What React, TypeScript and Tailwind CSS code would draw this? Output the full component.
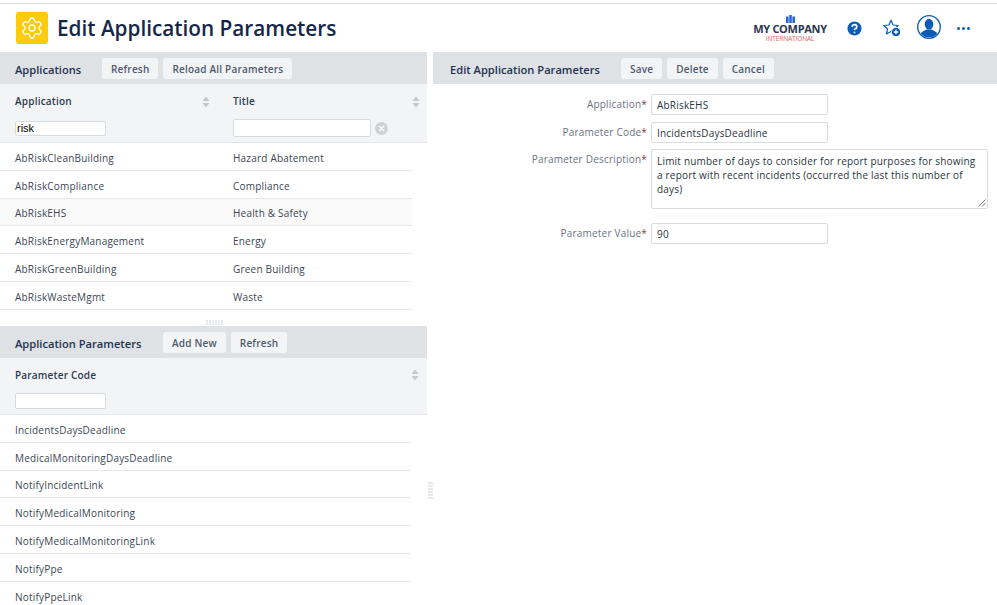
import { CircleHelp, Settings, X } from "lucide-react";

const applications = [
  { name: "AbRiskCleanBuilding", title: "Hazard Abatement" },
  { name: "AbRiskCompliance", title: "Compliance" },
  { name: "AbRiskEHS", title: "Health & Safety", selected: true },
  { name: "AbRiskEnergyManagement", title: "Energy" },
  { name: "AbRiskGreenBuilding", title: "Green Building" },
  { name: "AbRiskWasteMgmt", title: "Waste" },
];

const parameters = [
  "IncidentsDaysDeadline",
  "MedicalMonitoringDaysDeadline",
  "NotifyIncidentLink",
  "NotifyMedicalMonitoring",
  "NotifyMedicalMonitoringLink",
  "NotifyPpe",
  "NotifyPpeLink",
];

function SortIcon() {
  return (
    <svg width="8" height="12" viewBox="0 0 8 12" className="shrink-0">
      <path d="M4 0.5 L7.5 5 H0.5 Z" fill="#c4c8cc" />
      <path d="M4 11.5 L7.5 7 H0.5 Z" fill="#c4c8cc" />
    </svg>
  );
}

function Button({ label }: { label: string }) {
  return (
    <button className="h-[21px] rounded-[3px] bg-[#f3f4f6] px-[9px] pt-px text-[10px] font-semibold leading-[20px] tracking-[0.2px] text-[#4e5a6b]">
      {label}
    </button>
  );
}

function Bar({ title, buttons, titleClass }: { title: string; buttons: string[]; titleClass: string }) {
  return (
    <div className="flex h-[32px] shrink-0 items-center bg-[#dfe2e5] pt-[1px]">
      <span className={`${titleClass} mt-[3px] text-[11.15px] font-semibold text-[#1f3350]`}>{title}</span>
      <div className="flex gap-[5px]">
        {buttons.map((b) => (
          <Button key={b} label={b} />
        ))}
      </div>
    </div>
  );
}

function Handle({ vertical }: { vertical?: boolean }) {
  return (
    <div className={vertical ? "flex w-[5px] flex-col gap-[1px]" : "flex h-[5px] gap-[1px]"}>
      {[0, 1, 2, 3, 4, 5].map((i) => (
        <span key={i} className={vertical ? "h-[2px] w-[5px] bg-[#e6e8ea]" : "h-[5px] w-[2px] bg-[#e6e8ea]"} />
      ))}
    </div>
  );
}

function Field({ label, value }: { label: string; value: string }) {
  return (
    <div className="flex items-center">
      <label className="w-[218px] pr-[4px] text-right text-[10px] tracking-[0.2px] text-[#6b7280]">
        {label}
        <span className="text-[#8c3b3b]">*</span>
      </label>
      <div className="flex h-[21px] w-[177px] items-center rounded-[2px] border border-[#d8dbdf] px-[5px] pt-px text-[10px] tracking-[0.2px] text-[#2b3440]">
        {value}
      </div>
    </div>
  );
}

export default function App() {
  return (
    <div className="flex h-[605px] w-[997px] flex-col overflow-hidden bg-white font-['Open_Sans',sans-serif]">
      <div className="mt-[3px] h-px shrink-0 bg-[#dcdcdc]" />

      <header className="flex h-[48px] shrink-0 items-center pl-[16px]">
        <div className="flex h-[32px] w-[32px] items-center justify-center rounded-[3px] bg-[#fccb0a]">
          <Settings className="h-[24px] w-[24px] text-white" strokeWidth={1.3} />
        </div>
        <h1 className="ml-[9px] text-[20.75px] font-semibold leading-none text-[#14264a]">Edit Application Parameters</h1>

        <div className="ml-auto flex items-center">
          <div className="flex w-[74px] flex-col items-center leading-none">
            <svg width="9" height="8" viewBox="0 0 9 8">
              <path d="M0 1.5h2.6v6.5H0zM3.2 0h2.6v8H3.2zM6.4 1.5H9v6.5H6.4z" fill="#2d62d8" />
            </svg>
            <span className="mt-[1px] text-[11px] font-bold leading-[10px] tracking-[-0.3px] text-[#2a3555]">MY COMPANY</span>
            <span className="mt-[2px] text-[6.5px] leading-[6px] tracking-[-0.1px] text-[#d0695f]">INTERNATIONAL</span>
          </div>
          <CircleHelp className="ml-[18px] h-[19px] w-[19px] fill-[#0a5bb5] text-white" strokeWidth={2.2} />
          <svg width="18" height="18" viewBox="0 0 18 18" className="ml-[19px]">
            <path
              d="M8 1.2 L10.1 6 L15.2 6.5 L11.4 10 L12.5 15 L8 12.4 L3.5 15 L4.6 10 L0.8 6.5 L5.9 6 Z"
              fill="white"
              stroke="#0a5bb5"
              strokeWidth="1.2"
              strokeLinejoin="round"
            />
            <circle cx="13" cy="13" r="4.6" fill="#0a5bb5" stroke="white" strokeWidth="0.8" />
            <path d="M13 10.8v4.4M10.8 13h4.4" stroke="white" strokeWidth="1.3" />
          </svg>
          <svg width="24" height="24" viewBox="0 0 24 24" className="ml-[16px] -translate-y-px">
            <defs>
              <clipPath id="avatar">
                <circle cx="12" cy="12" r="10.5" />
              </clipPath>
            </defs>
            <circle cx="12" cy="12" r="11.3" fill="white" stroke="#0a5bb5" strokeWidth="1.3" />
            <g clipPath="url(#avatar)" fill="#0a5bb5">
              <ellipse cx="12" cy="9.2" rx="4.3" ry="5.4" />
              <path d="M2 24 C2 17 7 16 9.5 14.5 H14.5 C17 16 22 17 22 24 Z" />
            </g>
          </svg>
          <div className="ml-[16px] mr-[27px] flex gap-[2px]">
            <span className="h-[3px] w-[3px] rounded-full bg-[#0a5bb5]" />
            <span className="h-[3px] w-[3px] rounded-full bg-[#0a5bb5]" />
            <span className="h-[3px] w-[3px] rounded-full bg-[#0a5bb5]" />
          </div>
        </div>
      </header>

      <div className="flex min-h-0 flex-1">
        <div className="flex w-[427px] shrink-0 flex-col">
          <Bar title="Applications" buttons={["Refresh", "Reload All Parameters"]} titleClass="w-[102px] pl-[15px]" />
          <div className="h-[59px] shrink-0 border-b border-[#e4e6e8] bg-[#f3f4f6]">
            <div className="flex h-[35px] items-center">
              <div className="flex w-[218px] items-center justify-between pl-[15px] pr-[8px]">
                <span className="text-[10px] font-semibold tracking-[0.2px] text-[#2b3a4e]">Application</span>
                <SortIcon />
              </div>
              <div className="flex flex-1 items-center justify-between pl-[15px] pr-[7px]">
                <span className="text-[10px] font-semibold tracking-[0.2px] text-[#2b3a4e]">Title</span>
                <SortIcon />
              </div>
            </div>
            <div className="flex items-center">
              <div className="w-[218px] pl-[15px]">
                <div className="flex h-[15px] w-[91px] items-center rounded-[2px] border border-[#d8dbdf] bg-white pl-[1px] font-['Liberation_Sans',sans-serif] text-[11px] text-black">
                  risk
                </div>
              </div>
              <div className="flex items-center pl-[15px]">
                <div className="h-[18px] w-[138px] rounded-[2px] border border-[#d8dbdf] bg-white" />
                <span className="ml-[4px] flex h-[13px] w-[13px] items-center justify-center rounded-full bg-[#cfd1d3]">
                  <X className="h-[9px] w-[9px] text-white" strokeWidth={3} />
                </span>
              </div>
            </div>
          </div>
          <div className="w-[412px] shrink-0">
            {applications.map((row) => (
              <div
                key={row.name}
                className={`flex h-[27.8px] items-center border-b border-[#e6e8ea] pt-[4px] text-[10px] tracking-[0.2px] text-[#3c4654] ${row.selected ? "bg-[#fafafa]" : ""}`}
              >
                <span className="w-[218px] pl-[15px]">{row.name}</span>
                <span className="pl-[15px]">{row.title}</span>
              </div>
            ))}
          </div>
          <div className="flex h-[16.2px] shrink-0 items-end justify-center pb-[1px] pl-[1px]">
            <Handle />
          </div>

          <Bar title="Application Parameters" buttons={["Add New", "Refresh"]} titleClass="w-[163px] pl-[15px]" />
          <div className="h-[57px] shrink-0 border-b border-[#e4e6e8] bg-[#f3f4f6]">
            <div className="flex h-[35px] items-center justify-between pl-[15px] pr-[8px]">
              <span className="text-[10px] font-semibold tracking-[0.2px] text-[#2b3a4e]">Parameter Code</span>
              <SortIcon />
            </div>
            <div className="pl-[15px]">
              <div className="h-[16px] w-[91px] rounded-[2px] border border-[#d8dbdf] bg-white" />
            </div>
          </div>
          <div className="w-[411px] shrink-0">
            {parameters.map((p) => (
              <div
                key={p}
                className="flex h-[27.8px] items-center border-b border-[#e6e8ea] pl-[15px] pt-[4px] text-[10px] tracking-[0.2px] text-[#3c4654]"
              >
                {p}
              </div>
            ))}
          </div>
        </div>

        <div className="flex w-[6px] shrink-0 items-start justify-center pt-[430px]">
          <Handle vertical />
        </div>

        <div className="flex flex-1 flex-col">
          <Bar title="Edit Application Parameters" buttons={["Save", "Delete", "Cancel"]} titleClass="w-[188px] pl-[17px]" />
          <div className="flex flex-col pt-[10px]">
            <Field label="Application" value="AbRiskEHS" />
            <div className="mt-[7px]">
              <Field label="Parameter Code" value="IncidentsDaysDeadline" />
            </div>
            <div className="mt-[6px] flex items-start">
              <label className="w-[218px] pr-[4px] pt-[3px] text-right text-[10px] tracking-[0.2px] text-[#6b7280]">
                Parameter Description<span className="text-[#8c3b3b]">*</span>
              </label>
              <div className="relative h-[60px] w-[337px] rounded-[2px] border border-[#d8dbdf] px-[5px] py-[4px] text-[10px] leading-[14px] tracking-[0.2px] text-[#2b3440]">
                Limit number of days to consider for report purposes for showing a report with recent incidents (occurred the last this number of days)
                <svg width="8" height="8" viewBox="0 0 8 8" className="absolute bottom-[1px] right-[1px]">
                  <path d="M7.5 0.5 L0.5 7.5 M7.5 4 L4 7.5" stroke="#777" strokeWidth="1" />
                </svg>
              </div>
            </div>
            <div className="mt-[14px]">
              <Field label="Parameter Value" value="90" />
            </div>
          </div>
        </div>
      </div>
    </div>
  );
}
